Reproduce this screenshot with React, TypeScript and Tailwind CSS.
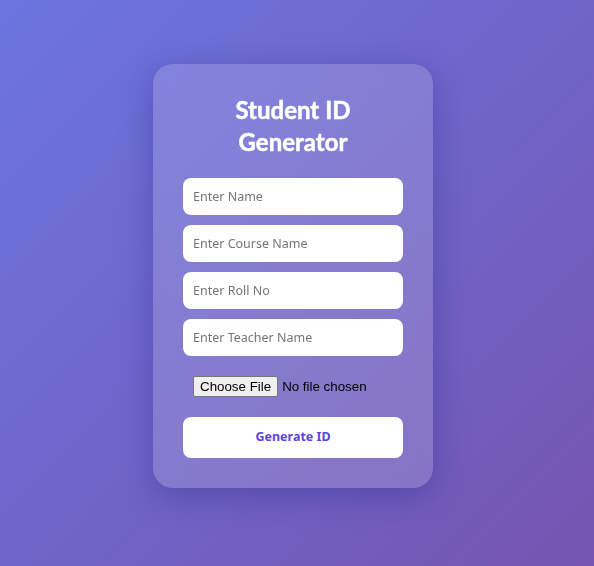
export default function App() {
  const fields = ["Enter Name", "Enter Course Name", "Enter Roll No", "Enter Teacher Name"];
  return (
    <div
      className="min-h-screen w-full flex items-center justify-center pr-2 pb-[14px] bg-[linear-gradient(135deg,#6b75e0_0%,#7555b0_100%)]"
      style={{ fontFamily: '"Noto Sans", "Open Sans", sans-serif' }}
    >
      <div className="w-[280px] p-[30px] rounded-[20px] bg-white/15 shadow-[0_8px_32px_rgba(31,38,135,0.37)] backdrop-blur-md">
        <h2
          className="text-white text-[24px] leading-[32px] font-bold text-center mb-5 [-webkit-text-stroke:0.5px_white]"
          style={{ fontFamily: 'Lato, "Noto Sans", sans-serif' }}
        >
          Student ID Generator
        </h2>
        <div className="flex flex-col gap-[10px]">
          {fields.map((f) => (
            <input
              key={f}
              type="text"
              placeholder={f}
              className="w-full h-[37px] px-[10px] rounded-lg bg-white text-[12.5px] text-gray-800 placeholder:text-[#757575] outline-none border-0"
            />
          ))}
        </div>
        <div className="py-[10px] px-[10px] mt-[10px] h-[41px] flex items-center">
          <input
            type="file"
            className="text-[13.33px] leading-[15px] text-black file:mr-[4px] file:h-[21px] file:px-[6px] file:bg-[#efefef] file:border file:border-solid file:border-[#767676] file:rounded-[2px] file:text-black file:text-[13.33px]"
            style={{ fontFamily: '"Liberation Sans", Arial, sans-serif' }}
          />
        </div>
        <button className="mt-[10px] w-full h-[41px] rounded-lg bg-white text-[#5646dc] text-[12.5px] font-bold">
          Generate ID
        </button>
      </div>
    </div>
  );
}
